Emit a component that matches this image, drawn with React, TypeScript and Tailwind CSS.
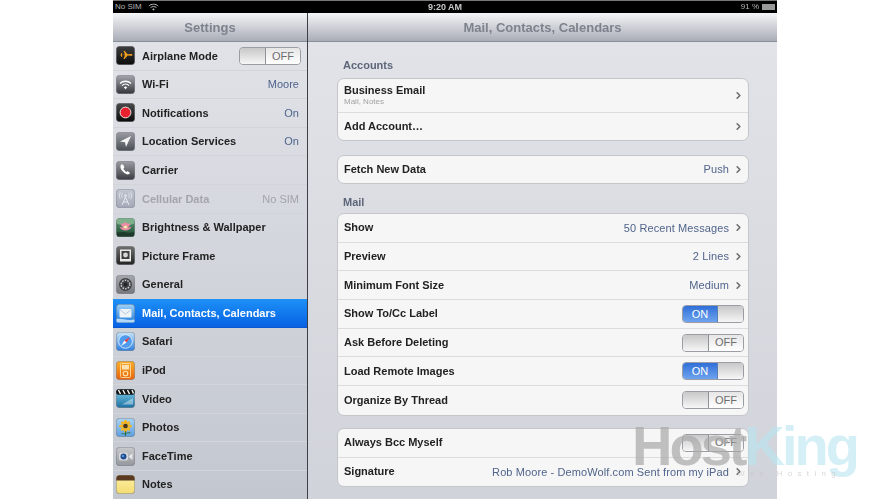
import React from 'react';
import { ChevronRight } from 'lucide-react';

const font = { fontFamily: '"Liberation Sans", Arial, sans-serif' };

// Settings app icons, each drawn on a 19x19 box
const IconBox: React.FC<{ id: string; from: string; to: string; children?: React.ReactNode }> = ({ id, from, to, children }) => (
  <svg width="19" height="19" viewBox="0 0 19 19" className="shrink-0">
    <defs>
      <linearGradient id={id} x1="0" y1="0" x2="0" y2="1">
        <stop offset="0" stopColor={from} />
        <stop offset="1" stopColor={to} />
      </linearGradient>
    </defs>
    <rect x="0.25" y="0.25" width="18.5" height="18.5" rx="3.5" fill={`url(#${id})`} stroke="#6b6e74" strokeWidth="0.5" />
    {children}
  </svg>
);

const icons: Record<string, React.ReactNode> = {
  airplane: (
    <IconBox id="i-air" from="#3d3d3d" to="#0c0c0c">
      <path d="M2.5 9.5l2-.6 1-2 .8.2-.3 1.8 3-.4-1.6-3.8 1.3.2 3 3.4 3.2-.2c1 0 1.6.4 1.6.8s-.6.8-1.6.8l-3.2-.2-3 3.4-1.3.2 1.6-3.8-3-.4.3 1.8-.8.2-1-2z" fill="#f2a01e" />
    </IconBox>
  ),
  wifi: (
    <IconBox id="i-wifi" from="#a4a7ad" to="#34363b">
      <path d="M4 8.5c3-3 8-3 11 0M6 10.6c2-1.9 5-1.9 7 0" fill="none" stroke="#fff" strokeWidth="1.3" />
      <path d="M9.5 11.2l1.7 1.4-1.7 1.6-1.7-1.6z" fill="#fff" />
    </IconBox>
  ),
  notifications: (
    <IconBox id="i-notif" from="#4a4a4a" to="#0a0a0a">
      <circle cx="9.5" cy="9.5" r="5.4" fill="#e8212e" stroke="#f5f5f5" strokeWidth="0.9" />
    </IconBox>
  ),
  location: (
    <IconBox id="i-loc" from="#9a9da4" to="#4a4d54">
      <path d="M15 4L4 9.6l5 .6 1 4.8z" fill="#f4f4f4" />
    </IconBox>
  ),
  carrier: (
    <IconBox id="i-car" from="#9a9da3" to="#3a3c41">
      <path d="M5.4 3.6c-1.6 1.2-1.2 3.6.6 6 2 2.7 4.6 4.3 6.6 3.7.8-.2 1.3-.8 1.4-1.3l-2.4-1.9-1.2.8c-.8-.3-2.7-2.4-3-3.5l1-1.1-1.4-2.8z" fill="#fff" />
    </IconBox>
  ),
  cellular: (
    <IconBox id="i-cell" from="#bfc3d0" to="#9fa3b4">
      <path d="M9.5 8L6 16M9.5 8l3.5 8M7.4 13h4.2" fill="none" stroke="#eef0f4" strokeWidth="0.9" />
      <circle cx="9.5" cy="6.6" r="1.2" fill="#eef0f4" />
      <path d="M6.4 4c-1 1.6-1 3.6 0 5.2M12.6 4c1 1.6 1 3.6 0 5.2M4.4 3.4c-1.4 2.2-1.4 4.8 0 6.8M14.6 3.4c1.4 2.2 1.4 4.8 0 6.8" fill="none" stroke="#eef0f4" strokeWidth="0.7" />
    </IconBox>
  ),
  brightness: (
    <IconBox id="i-bri" from="#5c9a70" to="#1e4a34">
      <rect x="0.5" y="0.5" width="18" height="6" rx="3" fill="#7fb08c" />
      <path d="M9.5 3.5c1 2 3 2.5 5 2-.5 2-1.5 3.4-3 4 1.4.2 2.8-.2 4-1-.8 2.6-3.4 4-6 4s-5.2-1.4-6-4c1.2.8 2.6 1.2 4 1-1.5-.6-2.5-2-3-4 2 .5 4 0 5-2z" fill="#e88ca6" />
      <ellipse cx="9.5" cy="9" rx="2" ry="1.6" fill="#f8e8a8" />
      <path d="M1 14c3 1.4 5-.6 8.5.2s5 .6 8.5-.2v3.6a1 1 0 0 1-1 1H2a1 1 0 0 1-1-1z" fill="#1d3a2a" />
    </IconBox>
  ),
  frame: (
    <IconBox id="i-frame" from="#707070" to="#222222">
      <rect x="4" y="3.5" width="11" height="12" fill="#e8e8e8" />
      <rect x="5.5" y="5" width="8" height="8" fill="#3f3f3f" />
      <circle cx="9.5" cy="9" r="2.4" fill="#d8d8d8" />
    </IconBox>
  ),
  general: (
    <IconBox id="i-gen" from="#a5a8ad" to="#74777c">
      <circle cx="9.5" cy="9.5" r="6.5" fill="#3f4145" />
      <circle cx="9.5" cy="9.5" r="4.3" fill="none" stroke="#c9cbcf" strokeWidth="1.5" strokeDasharray="1.6 1.1" />
      <circle cx="9.5" cy="9.5" r="1.7" fill="#222" />
    </IconBox>
  ),
  mail: (
    <IconBox id="i-mail" from="#9dd0f7" to="#1f7fe0">
      <rect x="3.5" y="5" width="12" height="8.5" rx="0.8" fill="#eef3f8" />
      <path d="M3.5 5.5l6 4.5 6-4.5" fill="none" stroke="#a9bfd6" strokeWidth="0.8" />
      <path d="M0.5 15c5-.8 11 2 18 .5v2a1 1 0 0 1-1 1H1.5a1 1 0 0 1-1-1z" fill="#d6ecfb" opacity="0.8" />
    </IconBox>
  ),
  safari: (
    <IconBox id="i-saf" from="#c6e4fa" to="#2d7fe0">
      <circle cx="9.5" cy="9.5" r="6.8" fill="#4f9bee" stroke="#eaf3fb" strokeWidth="0.8" />
      <path d="M14 5L10.6 10.6 8.4 8.4z" fill="#ef3f3f" />
      <path d="M5 14l3.4-5.6 2.2 2.2z" fill="#f4f4f4" />
    </IconBox>
  ),
  ipod: (
    <IconBox id="i-ipod" from="#fbb02a" to="#e8630c">
      <rect x="4.5" y="2.5" width="10" height="14" rx="1" fill="none" stroke="#fde3b4" strokeWidth="0.8" />
      <rect x="6" y="4" width="7" height="4.5" fill="#fde3b4" />
      <circle cx="9.5" cy="12.5" r="2.3" fill="none" stroke="#fde3b4" strokeWidth="1.1" />
    </IconBox>
  ),
  video: (
    <IconBox id="i-vid" from="#7fd0ec" to="#1b6fa0">
      <rect x="0.3" y="0.3" width="18.4" height="5.5" rx="2" fill="#111" />
      <path d="M2.5 1l2 4M7 1l2 4M11.5 1l2 4M16 1l1.5 3.5" stroke="#f0f0f0" strokeWidth="1.5" fill="none" />
      <path d="M6 15.5L17 9v6.5z" fill="#d5eef8" opacity="0.5" />
    </IconBox>
  ),
  photos: (
    <IconBox id="i-pho" from="#a9d4f7" to="#5b9fe0">
      <g fill="#f7b51d">
        <ellipse cx="9.5" cy="4" rx="1.6" ry="2.5" />
        <ellipse cx="9.5" cy="12" rx="1.6" ry="2.5" />
        <ellipse cx="5.5" cy="8" rx="2.5" ry="1.6" />
        <ellipse cx="13.5" cy="8" rx="2.5" ry="1.6" />
        <ellipse cx="6.6" cy="5" rx="2" ry="1.5" transform="rotate(45 6.6 5)" />
        <ellipse cx="12.4" cy="5" rx="2" ry="1.5" transform="rotate(-45 12.4 5)" />
        <ellipse cx="6.6" cy="11" rx="2" ry="1.5" transform="rotate(-45 6.6 11)" />
        <ellipse cx="12.4" cy="11" rx="2" ry="1.5" transform="rotate(45 12.4 11)" />
      </g>
      <circle cx="9.5" cy="8" r="2.3" fill="#4a3418" />
      <path d="M9.5 13v5M9.5 16c1.5-1.5 3-1.5 5-1M9.5 16.5c-1.5-1-2.5-1-4-.8" stroke="#2f6a32" strokeWidth="0.9" fill="none" />
    </IconBox>
  ),
  facetime: (
    <IconBox id="i-ft" from="#c8cacd" to="#94979c">
      <rect x="3" y="5.5" width="9" height="8" rx="2" fill="#d7d9dc" />
      <circle cx="7.5" cy="9.5" r="3" fill="#1f4f92" />
      <circle cx="7" cy="9" r="1" fill="#7fa9dc" />
      <path d="M12.5 9.5l4-3.5v7z" fill="#e7e8ea" />
    </IconBox>
  ),
  notes: (
    <IconBox id="i-notes" from="#fdf0a4" to="#f4dc72">
      <path d="M0.3 5.5V3.8A3.5 3.5 0 0 1 3.8.3h11.4a3.5 3.5 0 0 1 3.5 3.5v1.7z" fill="#5b3a22" />
    </IconBox>
  ),
};

const navItems = [
  { key: 'airplane', label: 'Airplane Mode', toggle: true },
  { key: 'wifi', label: 'Wi-Fi', value: 'Moore' },
  { key: 'notifications', label: 'Notifications', value: 'On' },
  { key: 'location', label: 'Location Services', value: 'On' },
  { key: 'carrier', label: 'Carrier' },
  { key: 'cellular', label: 'Cellular Data', value: 'No SIM', disabled: true },
  { key: 'brightness', label: 'Brightness & Wallpaper' },
  { key: 'frame', label: 'Picture Frame' },
  { key: 'general', label: 'General' },
  { key: 'mail', label: 'Mail, Contacts, Calendars', active: true },
  { key: 'safari', label: 'Safari' },
  { key: 'ipod', label: 'iPod' },
  { key: 'video', label: 'Video' },
  { key: 'photos', label: 'Photos' },
  { key: 'facetime', label: 'FaceTime' },
  { key: 'notes', label: 'Notes' },
];

const Toggle: React.FC<{ on?: boolean }> = ({ on }) =>
  on ? (
    <div className="flex h-[18px] w-[62px] shrink-0 overflow-hidden rounded-[4px] border border-[#9a9da3]">
      <div className="flex w-[35px] items-center justify-center border-r border-[#5a7fb5] bg-linear-to-b from-[#2f6fd8] to-[#6ea3ee] text-[11px] text-white">ON</div>
      <div className="flex-1 bg-linear-to-b from-[#c8c8c8] to-[#f6f6f6]" />
    </div>
  ) : (
    <div className="flex h-[18px] w-[62px] shrink-0 overflow-hidden rounded-[4px] border border-[#9a9da3]">
      <div className="w-[26px] border-r border-[#8f9297] bg-linear-to-b from-[#c8c8c8] to-[#f6f6f6]" />
      <div className="flex flex-1 items-center justify-center bg-linear-to-b from-[#e6e6e6] to-white text-[11px] text-[#6e6e6e]">OFF</div>
    </div>
  );

const Row: React.FC<{
  label: string;
  value?: string;
  sub?: string;
  chevron?: boolean;
  toggle?: 'on' | 'off';
  height?: string;
}> = ({ label, value, sub, chevron, toggle, height = 'h-[28.7px]' }) => (
  <div className={`flex items-center justify-between border-b border-[#dcdcde] pl-[6px] pr-[4px] last:border-b-0 ${height}`}>
    <div className="flex flex-col">
      <span className="text-[11px] leading-[13px] font-bold text-[#222]">{label}</span>
      {sub && <span className="text-[8px] leading-[10px] text-[#a2a2a2]">{sub}</span>}
    </div>
    <div className="flex items-center gap-[4px]">
      {value && <span className="text-[11px] tracking-[0.1px] text-[#50648c]">{value}</span>}
      {chevron && <ChevronRight size={11} strokeWidth={3.5} className="text-[#6e6e6e]" />}
      {toggle && <Toggle on={toggle === 'on'} />}
    </div>
  </div>
);

const Group: React.FC<{ children: React.ReactNode }> = ({ children }) => (
  <div className="overflow-hidden rounded-[7px] border border-[#c4c6ca] bg-[#f6f6f6]">{children}</div>
);

const GroupLabel: React.FC<{ children: React.ReactNode }> = ({ children }) => (
  <div className="pl-[6px] text-[11px] leading-[13px] font-bold text-[#5d6679]">{children}</div>
);

export default function App() {
  return (
    <div className="relative h-[500px] w-[889px] overflow-hidden bg-white" style={font}>
      <div className="ml-[113px] flex h-[499px] w-[664px] flex-col overflow-hidden blur-[0.35px]">
        {/* Status bar */}
        <div className="flex h-[13px] shrink-0 items-center justify-between border-t border-[#777] bg-black px-[2px] text-[8px] leading-none text-[#b5b5b5]">
          <div className="flex w-[100px] items-center gap-[6px]">
            <span>No SIM</span>
            <svg width="11" height="8" viewBox="0 0 11 8">
              <path d="M.8 3c2.6-2.4 6.8-2.4 9.4 0M2.5 4.7c1.7-1.5 4.3-1.5 6 0" fill="none" stroke="#b5b5b5" strokeWidth="1" />
              <path d="M5.5 5.2l1.3 1.2-1.3 1.2-1.3-1.2z" fill="#b5b5b5" />
            </svg>
          </div>
          <span className="text-[9px] font-bold text-[#c8c8c8]">9:20 AM</span>
          <div className="flex w-[100px] items-center justify-end gap-[3px]">
            <span>91 %</span>
            <div className="h-[6px] w-[13px] border border-[#999] bg-[#999]" />
          </div>
        </div>

        <div className="flex min-h-0 flex-1">
          {/* Sidebar */}
          <div className="flex w-[195px] shrink-0 flex-col border-r border-[#3c3f45] bg-linear-to-b from-[#e2e4e9] to-[#c3c7cf]">
            <div className="flex h-[29px] shrink-0 items-center justify-center border-b border-[#8a8e97] bg-linear-to-b from-[#f5f6f8] to-[#a9adb7] pt-px text-[13px] font-bold text-[#7d828c]">
              Settings
            </div>
            {navItems.map((item) => (
              <div
                key={item.key}
                className={`flex h-[28.6px] shrink-0 items-center gap-[7px] border-b pl-[3px] pr-[8px] ${
                  item.active
                    ? 'border-[#0a58d0] bg-linear-to-b from-[#1e90f6] to-[#0a62e4]'
                    : 'border-[#d2d4d9]'
                }`}
              >
                <div className={item.disabled ? 'opacity-90' : ''}>{icons[item.key]}</div>
                <span
                  className={`flex-1 text-[11px] font-bold ${
                    item.active ? 'text-white' : item.disabled ? 'text-[#a3a5aa]' : 'text-[#222]'
                  }`}
                >
                  {item.label}
                </span>
                {item.value && (
                  <span className={`text-[11px] ${item.disabled ? 'text-[#a3a5aa]' : 'text-[#50648c]'}`}>{item.value}</span>
                )}
                {item.toggle && (
                  <div className="-mr-[2px]">
                    <Toggle />
                  </div>
                )}
              </div>
            ))}
          </div>

          {/* Detail pane */}
          <div className="flex min-w-0 flex-1 flex-col bg-linear-to-b from-[#e2e4e9] to-[#d0d3d9]">
            <div className="flex h-[29px] shrink-0 items-center justify-center border-b border-[#8a8e97] bg-linear-to-b from-[#f5f6f8] to-[#a9adb7] pt-px text-[13px] font-bold text-[#7d828c]">
              Mail, Contacts, Calendars
            </div>
            <div className="flex flex-col pl-[29px] pr-[28px] pt-[17px]">
              <GroupLabel>Accounts</GroupLabel>
              <div className="mt-[6px]">
                <Group>
                  <Row label="Business Email" sub="Mail, Notes" chevron height="h-[33.5px]" />
                  <Row label="Add Account…" chevron height="h-[27.5px]" />
                </Group>
              </div>
              <div className="mt-[14px]">
                <Group>
                  <Row label="Fetch New Data" value="Push" chevron height="h-[27px]" />
                </Group>
              </div>
              <div className="mt-[12px]">
                <GroupLabel>Mail</GroupLabel>
              </div>
              <div className="mt-[4px]">
                <Group>
                  <Row label="Show" value="50 Recent Messages" chevron />
                  <Row label="Preview" value="2 Lines" chevron />
                  <Row label="Minimum Font Size" value="Medium" chevron />
                  <Row label="Show To/Cc Label" toggle="on" />
                  <Row label="Ask Before Deleting" toggle="off" />
                  <Row label="Load Remote Images" toggle="on" />
                  <Row label="Organize By Thread" toggle="off" />
                </Group>
              </div>
              <div className="mt-[12px]">
                <Group>
                  <Row label="Always Bcc Myself" toggle="off" />
                  <Row label="Signature" value="Rob Moore - DemoWolf.com Sent from my iPad" chevron />
                </Group>
              </div>
              <div className="mt-[11px]">
                <GroupLabel>Contacts</GroupLabel>
              </div>
            </div>
          </div>
        </div>
      </div>

      {/* Watermark */}
      <div className="pointer-events-none absolute left-[632px] top-[418px] flex text-[56px] leading-[56px] font-bold tracking-[-3px] blur-[0.4px]">
        <span className="text-[#a8a8a8]/70">Host</span>
        <span className="text-[#b8e4f0]/60">King</span>
      </div>
      <div className="pointer-events-none absolute left-[737px] top-[468px] text-[8px] tracking-[5.3px] text-[#c8c8c8]/70">Web Hosting</div>
    </div>
  );
}
